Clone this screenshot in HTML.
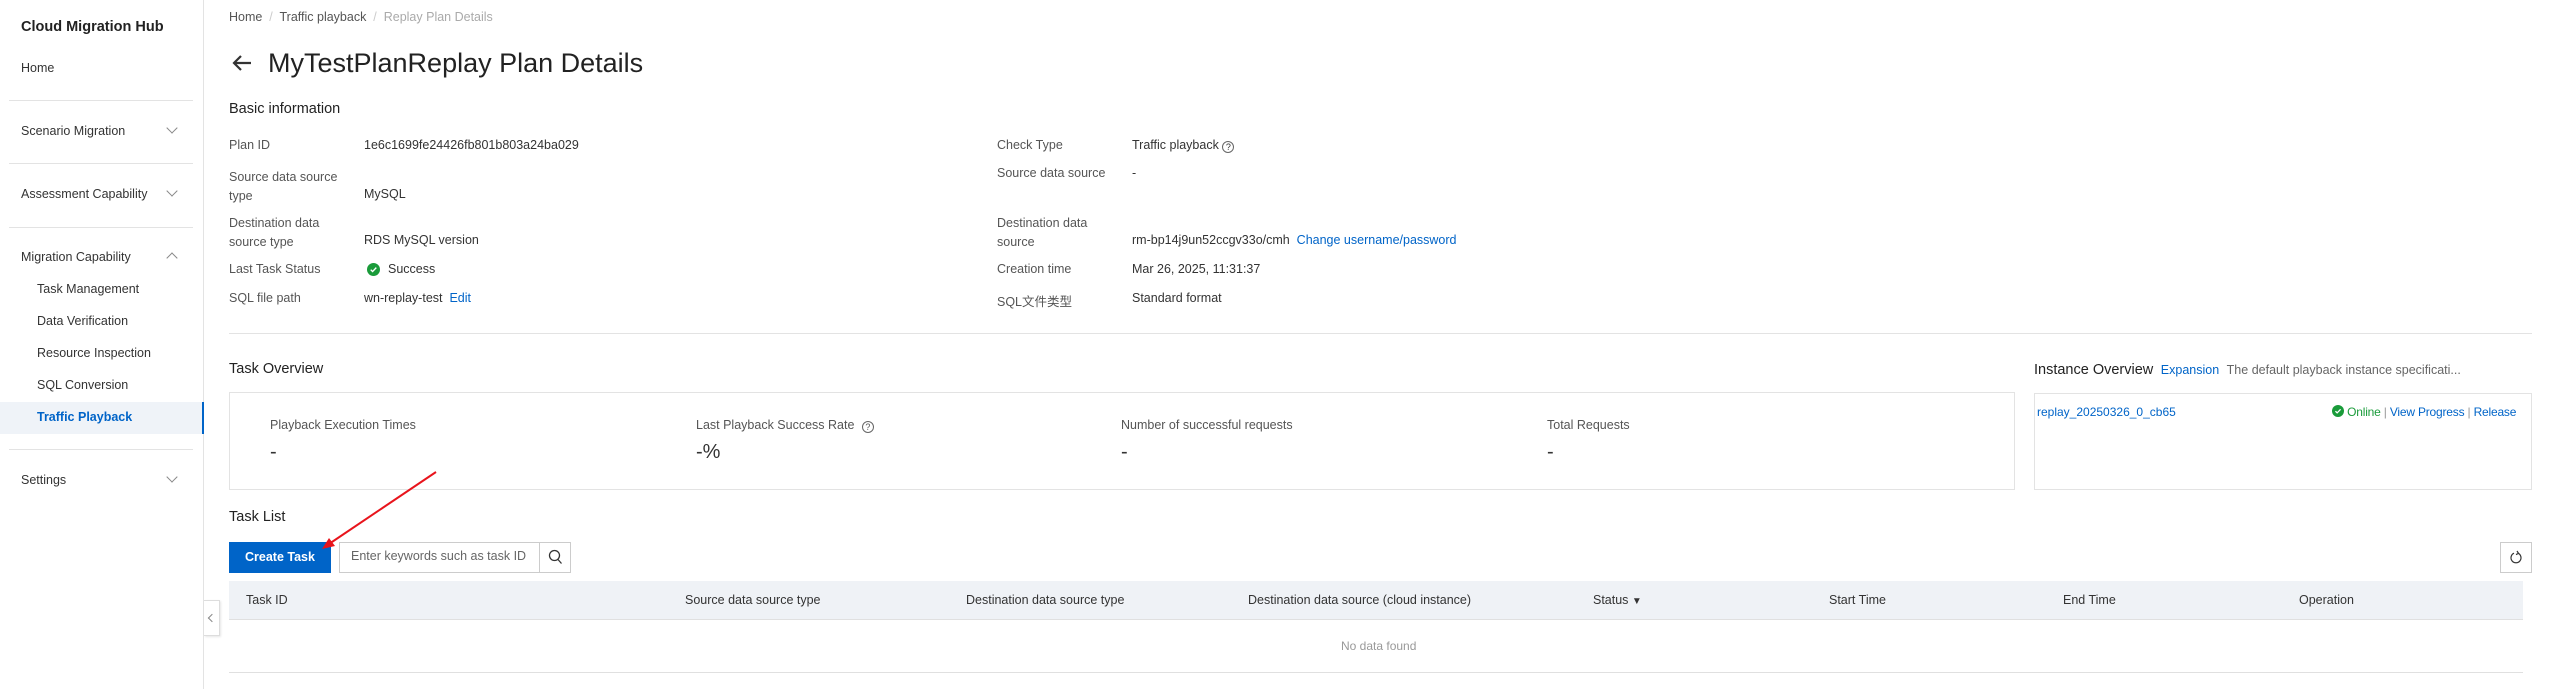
<!DOCTYPE html>
<html><head><meta charset="utf-8"><style>
*{box-sizing:border-box;margin:0;padding:0}
body{width:2551px;height:689px;background:#fff;font-family:"Liberation Sans","Noto Sans CJK SC",sans-serif;color:#333;font-size:12.5px;position:relative;overflow:hidden}
.a{position:absolute;white-space:nowrap}
.sb{position:absolute;left:0;top:0;width:204px;height:689px;border-right:1px solid #e3e3e3;background:#fff}
.hr{position:absolute;left:9px;width:184px;height:1px;background:#e3e3e3}
.chev{position:absolute;left:168px;width:8px;height:8px;border-right:1.2px solid #888;border-bottom:1.2px solid #888}
.lbl{color:#555}
.blue{color:#0064c8}
</style></head><body>
<div class="sb">
 <div class="a" style="left:21px;top:19px;font-size:14.5px;font-weight:bold;color:#222">Cloud Migration Hub</div>
 <div class="a" style="left:21px;top:61px">Home</div>
 <div class="hr" style="top:100px"></div>
 <div class="a" style="left:21px;top:124px">Scenario Migration</div>
 <div class="chev" style="top:124px;transform:rotate(45deg)"></div>
 <div class="hr" style="top:163px"></div>
 <div class="a" style="left:21px;top:187px">Assessment Capability</div>
 <div class="chev" style="top:187px;transform:rotate(45deg)"></div>
 <div class="hr" style="top:227px"></div>
 <div class="a" style="left:21px;top:250px">Migration Capability</div>
 <div class="chev" style="top:254px;transform:rotate(225deg)"></div>
 <div class="a" style="left:37px;top:282px">Task Management</div>
 <div class="a" style="left:37px;top:314px">Data Verification</div>
 <div class="a" style="left:37px;top:346px">Resource Inspection</div>
 <div class="a" style="left:37px;top:378px">SQL Conversion</div>
 <div style="position:absolute;left:0;top:402px;width:204px;height:32px;background:#eff3f8;border-right:2px solid #0064c8"></div>
 <div class="a blue" style="left:37px;top:410px;font-weight:bold">Traffic Playback</div>
 <div class="hr" style="top:449px"></div>
 <div class="a" style="left:21px;top:473px">Settings</div>
 <div class="chev" style="top:473px;transform:rotate(45deg)"></div>
</div>
<div style="position:absolute;left:204px;top:600px;width:16px;height:36px;border:1px solid #ddd;border-left:none;background:#fff;box-shadow:1px 1px 2px rgba(0,0,0,.1)"><div style="position:absolute;left:5px;top:14px;width:6px;height:6px;border-left:1px solid #888;border-bottom:1px solid #888;transform:rotate(45deg)"></div></div>

<div class="a" style="left:229px;top:10px;font-size:12.5px;color:#555">Home <span style="color:#ccc">&nbsp;/&nbsp;</span> Traffic playback <span style="color:#ccc">&nbsp;/&nbsp;</span> <span style="color:#aaa">Replay Plan Details</span></div>
<svg class="a" style="left:231px;top:53px" width="22" height="20" viewBox="0 0 22 20"><path d="M20 10H3M10 3L3 10l7 7" fill="none" stroke="#333" stroke-width="2.2"/></svg>
<div class="a" style="left:268px;top:48px;font-size:27px;color:#222">MyTestPlanReplay Plan Details</div>
<div class="a" style="left:229px;top:101px;font-size:14.5px;color:#222">Basic information</div>

<div class="a lbl" style="left:229px;top:138px">Plan ID</div><div class="a" style="left:364px;top:138px">1e6c1699fe24426fb801b803a24ba029</div>
<div class="a lbl" style="left:229px;top:168px;line-height:19px">Source data source<br>type</div><div class="a" style="left:364px;top:187px">MySQL</div>
<div class="a lbl" style="left:229px;top:214px;line-height:19px">Destination data<br>source type</div><div class="a" style="left:364px;top:233px">RDS MySQL version</div>
<div class="a lbl" style="left:229px;top:262px">Last Task Status</div>
<svg class="a" style="left:367px;top:263px" width="13" height="13" viewBox="0 0 14 14"><circle cx="7" cy="7" r="7" fill="#1a9b3a"/><path d="M4 7.2l2 2 4-4.2" fill="none" stroke="#fff" stroke-width="1.5"/></svg>
<div class="a" style="left:388px;top:262px">Success</div>
<div class="a lbl" style="left:229px;top:291px">SQL file path</div><div class="a" style="left:364px;top:291px">wn-replay-test <span class="blue">&nbsp;Edit</span></div>

<div class="a lbl" style="left:997px;top:138px">Check Type</div><div class="a" style="left:1132px;top:138px">Traffic playback <span style="display:inline-block;width:12px;height:12px;border:1px solid #666;border-radius:50%;font-size:9px;text-align:center;line-height:11px;vertical-align:-1px">?</span></div>
<div class="a lbl" style="left:997px;top:166px">Source data source</div><div class="a" style="left:1132px;top:166px">-</div>
<div class="a lbl" style="left:997px;top:214px;line-height:19px">Destination data<br>source</div><div class="a" style="left:1132px;top:233px">rm-bp14j9un52ccgv33o/cmh <span class="blue">&nbsp;Change username/password</span></div>
<div class="a lbl" style="left:997px;top:262px">Creation time</div><div class="a" style="left:1132px;top:262px">Mar 26, 2025, 11:31:37</div>
<div class="a lbl" style="left:997px;top:291px">SQL文件类型</div><div class="a" style="left:1132px;top:291px">Standard format</div>

<div style="position:absolute;left:229px;top:333px;width:2303px;height:1px;background:#e3e3e3"></div>

<div class="a" style="left:229px;top:361px;font-size:14.5px;color:#222">Task Overview</div>
<div style="position:absolute;left:229px;top:392px;width:1786px;height:98px;border:1px solid #e3e3e3"></div>
<div class="a lbl" style="left:270px;top:418px">Playback Execution Times</div><div class="a" style="left:270px;top:441px;font-size:20px">-</div>
<div class="a lbl" style="left:696px;top:418px">Last Playback Success Rate <span style="display:inline-block;width:12px;height:12px;border:1px solid #666;border-radius:50%;font-size:9px;text-align:center;line-height:11px;vertical-align:-1px;margin-left:4px">?</span></div><div class="a" style="left:696px;top:441px;font-size:20px">-%</div>
<div class="a lbl" style="left:1121px;top:418px">Number of successful requests</div><div class="a" style="left:1121px;top:441px;font-size:20px">-</div>
<div class="a lbl" style="left:1547px;top:418px">Total Requests</div><div class="a" style="left:1547px;top:441px;font-size:20px">-</div>

<div class="a" style="left:2034px;top:362px;font-size:14.5px;color:#222">Instance Overview <span class="blue" style="font-size:12.5px">&nbsp;Expansion</span> <span style="font-size:12.5px;color:#666">&nbsp;The default playback instance specificati...</span></div>
<div style="position:absolute;left:2034px;top:393px;width:498px;height:97px;border:1px solid #e3e3e3"></div>
<div class="a blue" style="left:2037px;top:405px;font-size:12px">replay_20250326_0_cb65</div>
<div class="a" style="left:2332px;top:405px;font-size:12px;letter-spacing:-0.2px"><svg width="12" height="12" viewBox="0 0 14 14" style="vertical-align:-1px"><circle cx="7" cy="7" r="7" fill="#1a9b3a"/><path d="M4 7.2l2 2 4-4.2" fill="none" stroke="#fff" stroke-width="1.5"/></svg><span style="color:#1a9b3a"> Online</span> <span style="color:#999">|</span> <span class="blue">View Progress</span> <span style="color:#999">|</span> <span class="blue">Release</span></div>

<div class="a" style="left:229px;top:509px;font-size:14.5px;color:#222">Task List</div>
<div class="a" style="left:229px;top:542px;width:102px;height:31px;background:#0064c8;color:#fff;font-weight:bold;text-align:center;line-height:31px;font-size:12.5px">Create Task</div>
<div style="position:absolute;left:339px;top:542px;width:232px;height:31px;border:1px solid #ccc"></div>
<div class="a" style="left:351px;top:549px;color:#666;font-size:12.5px">Enter keywords such as task ID</div>
<div style="position:absolute;left:539px;top:542px;width:1px;height:31px;background:#ccc"></div>
<svg class="a" style="left:548px;top:549px" width="15" height="16" viewBox="0 0 15 16"><circle cx="6.5" cy="6.5" r="5" fill="none" stroke="#333" stroke-width="1.3"/><path d="M10 10.5l3.5 4" stroke="#333" stroke-width="1.3"/></svg>
<div style="position:absolute;left:2500px;top:542px;width:32px;height:31px;border:1px solid #ccc"></div>
<svg class="a" style="left:2509px;top:550px" width="14" height="15" viewBox="0 0 14 15"><path d="M9 3.2A5 5 0 1 1 5 3.2" fill="none" stroke="#333" stroke-width="1.2"/><path d="M8 1l1.5 2.4L7 4.6" fill="none" stroke="#333" stroke-width="1.2"/></svg>

<div style="position:absolute;left:229px;top:581px;width:2294px;height:39px;background:#eff2f6;border-bottom:1px solid #e0e0e0"></div>
<div class="a" style="left:246px;top:593px">Task ID</div>
<div class="a" style="left:685px;top:593px">Source data source type</div>
<div class="a" style="left:966px;top:593px">Destination data source type</div>
<div class="a" style="left:1248px;top:593px">Destination data source (cloud instance)</div>
<div class="a" style="left:1593px;top:593px">Status <span style="font-size:10px">▼</span></div>
<div class="a" style="left:1829px;top:593px">Start Time</div>
<div class="a" style="left:2063px;top:593px">End Time</div>
<div class="a" style="left:2299px;top:593px">Operation</div>
<div class="a" style="left:1341px;top:639px;color:#999;font-size:12px">No data found</div>
<div style="position:absolute;left:229px;top:672px;width:2294px;height:1px;background:#e0e0e0"></div>

<svg class="a" style="left:0;top:0" width="2551" height="689"><path d="M436 472L326 546" stroke="#e8141c" stroke-width="2"/><path d="M322 549l13-3-6-8z" fill="#e8141c"/></svg>
</body></html>
